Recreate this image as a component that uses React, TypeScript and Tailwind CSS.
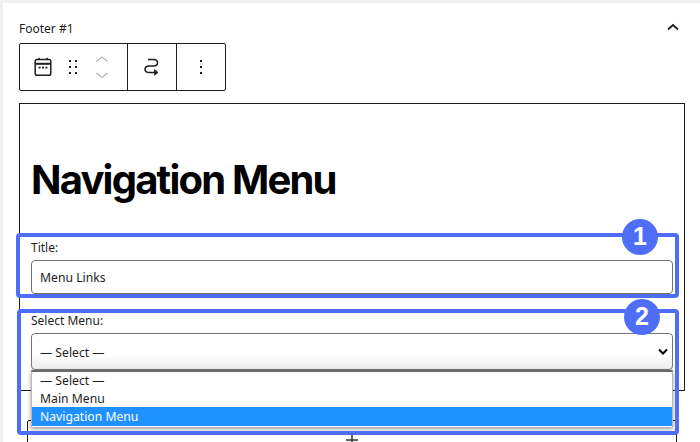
import React from "react";

const ui = { fontFamily: '"Noto Sans", "Open Sans", sans-serif' };

function Badge({ n, className }: { n: string; className: string }) {
  return (
    <div className={`absolute z-30 w-[36px] h-[36px] rounded-full bg-[#4f6ef7] text-white flex items-center justify-center text-[25px] font-bold ${className}`} style={{ fontFamily: '"Liberation Sans", sans-serif' }}>
      {n}
    </div>
  );
}

export default function App() {
  return (
    <div className="relative w-[700px] h-[442px] overflow-hidden bg-[#f0f0f0] pt-[3px] pl-[3px]" style={ui}>
      <div className="bg-white h-full w-full pl-[16px] pr-[12px] pt-[16px]">
        <div className="flex items-center justify-between w-[660px] h-[19px] text-[12px] text-[#1e1e1e]">
          <span>Footer #1</span>
          <svg width="12" height="8" viewBox="0 0 12 8" className="mt-[-4px]"><path d="M1 6.5l5-4.5 5 4.5" fill="none" stroke="#1e1e1e" strokeWidth="1.7" /></svg>
        </div>
        <div className="mt-[5px] w-[207px] h-[48px] border border-[#1e1e1e] rounded-[2px] flex">
          <div className="w-[108px] flex items-center border-r border-[#1e1e1e] pl-[14px]">
            <svg width="18" height="20" viewBox="0 0 18 20" fill="none" stroke="#1e1e1e" strokeWidth="1.5">
              <rect x="1.2" y="2.6" width="15.6" height="15.6" rx="1.8" />
              <path d="M1.2 6.8h15.6" strokeWidth="2" />
              <path d="M5 0.8V3M13 0.8V3" />
              <path d="M4.6 10.6h2M8 10.6h2M11.4 10.6h2" strokeWidth="1.8" />
            </svg>
            <svg width="10" height="16" viewBox="0 0 10 16" className="ml-[17px]" fill="#1e1e1e">
              <rect x="0" y="1" width="2" height="2" /><rect x="6" y="1" width="2" height="2" />
              <rect x="0" y="7" width="2" height="2" /><rect x="6" y="7" width="2" height="2" />
              <rect x="0" y="13" width="2" height="2" /><rect x="6" y="13" width="2" height="2" />
            </svg>
            <svg width="14" height="24" viewBox="0 0 14 24" className="ml-[16px]" fill="none" stroke="#b5b5b5" strokeWidth="1.3">
              <path d="M1.5 6.5L7 2l5.5 4.5M1.5 18L7 22.5l5.5-4.5" />
            </svg>
          </div>
          <div className="w-[49px] flex items-center justify-center border-r border-[#1e1e1e]">
            <svg width="20" height="22" viewBox="0 0 20 22" fill="none" stroke="#1e1e1e" strokeWidth="1.5">
              <path d="M6 3.5h5.5q4 0 4 3.2t-4 3.2h-4q-4.5 0-4.5 3.3t4.5 3.3h5" />
              <path d="M12.5 13.6l3.5 2.8-3.5 2.8z" fill="#1e1e1e" strokeWidth="0.8" />
            </svg>
          </div>
          <div className="flex-1 flex items-center justify-center">
            <svg width="4" height="16" viewBox="0 0 4 16" fill="#1e1e1e"><rect x="1" y="1" width="2" height="2" /><rect x="1" y="7" width="2" height="2" /><rect x="1" y="13" width="2" height="2" /></svg>
          </div>
        </div>
        <div className="mt-[12px] w-[666px] h-[288px] border border-[#1e1e1e] relative">
          <h1 className="mt-[52px] ml-[11px] text-[40px] leading-[48px] font-bold text-black tracking-[-1.8px]" style={{ fontFamily: "Inter, sans-serif" }}>Navigation Menu</h1>
          <div className="mt-[36px] px-[11px] text-[12px] text-[#1e1e1e]">
            <div className="leading-[16px] h-[20px]">Title:</div>
            <div className="h-[34px] border border-[#757575] rounded-[4px] flex items-center pl-[8px] pt-[3px] text-[12.2px]">Menu Links</div>
            <div className="mt-[19px] leading-[16px] h-[20px]">Select Menu:</div>
            <div className="h-[37px] border border-[#757575] rounded-[4px] bg-gradient-to-b from-white from-60% to-[#ececec] flex items-center justify-between pl-[8px] pr-[4px] pt-[3px] text-[12.2px]">
              <span>— Select —</span>
              <svg width="10" height="7" viewBox="0 0 10 7" className="mt-[-3px]"><path d="M1 1.5l4 4 4-4" fill="none" stroke="#000" strokeWidth="2" /></svg>
            </div>
          </div>
        </div>
        <div className="mt-[29px] ml-[8px] w-[650px] h-[60px] border border-[#1e1e1e] rounded-[2px] flex justify-center pt-[13px]">
          <svg width="12" height="12" viewBox="0 0 12 12"><path d="M6 0v12M0 6h12" stroke="#333" strokeWidth="1.5" /></svg>
        </div>
      </div>
      {/* dropdown list */}
      <div className="absolute left-[31px] top-[370px] w-[642px] h-[57px] z-10 bg-white border-t-2 border-[#6b6b6b] border-x border-x-[#b8b8b8] shadow-[0_2px_4px_rgba(0,0,0,0.4)] text-[12.2px] text-[#1e1e1e]">
        <div className="pl-[8px] h-[18px] leading-[20px] mt-[-1px]">— Select —</div>
        <div className="pl-[8px] h-[18px] leading-[20px]">Main Menu</div>
        <div className="pl-[8px] h-[19px] leading-[20px] bg-[#1e90ff] text-white">Navigation Menu</div>
      </div>
      {/* annotations */}
      <div className="absolute z-20 left-[16px] top-[233px] w-[663px] h-[65px] border-[4px] border-[#4f6ef7] rounded-[4px]" />
      <div className="absolute z-20 left-[17px] top-[309px] w-[662px] h-[126px] border-[4px] border-[#4f6ef7] rounded-[4px]" />
      <Badge n="1" className="left-[622px] top-[219px]" />
      <Badge n="2" className="left-[624px] top-[299px]" />
    </div>
  );
}
